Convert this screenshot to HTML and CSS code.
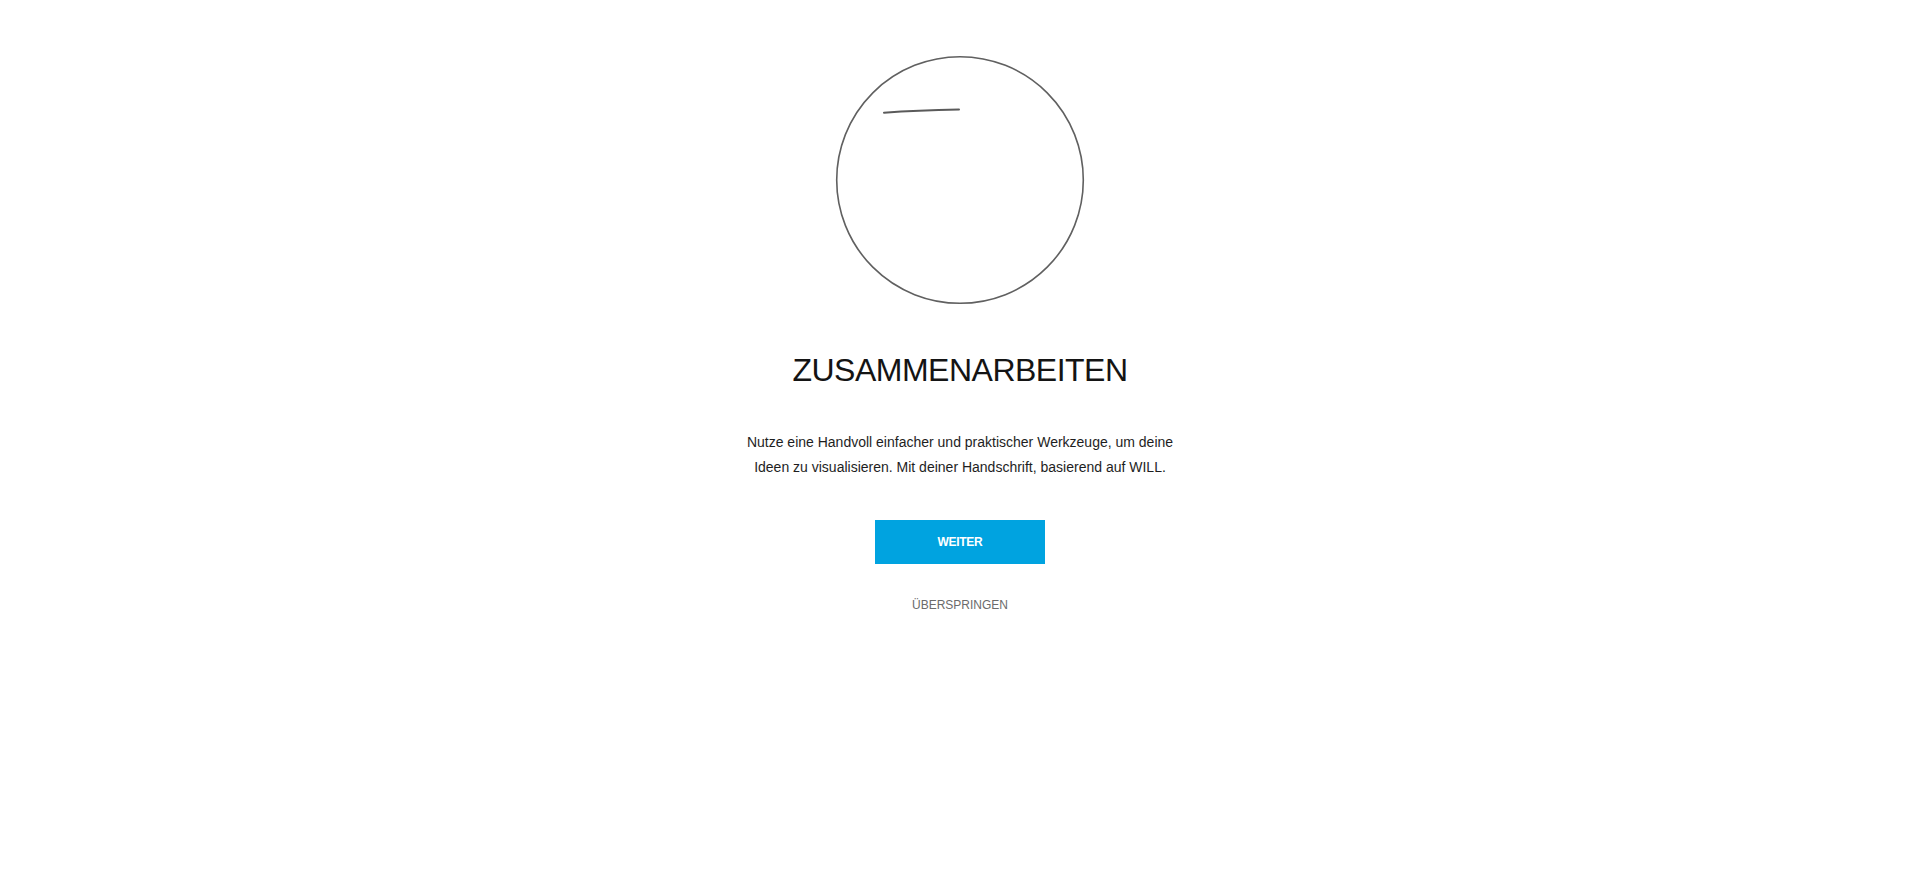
FILE: index.html
```html
<!DOCTYPE html>
<html lang="de">
<head>
<meta charset="utf-8">
<title>Zusammenarbeiten</title>
<link rel="stylesheet" href="styles.css">
</head>
<body>
<main class="onboarding">
  <svg class="illustration" width="250" height="250" viewBox="0 0 250 250" aria-hidden="true">
    <circle cx="125" cy="125" r="123.3" fill="none" stroke="#606060" stroke-width="1.6"/>
    <path d="M49 57.7 Q82 55.5 124 54.6" fill="none" stroke="#5a5a5a" stroke-width="2" stroke-linecap="round"/>
  </svg>
  <h1 class="title">ZUSAMMENARBEITEN</h1>
  <p class="text">Nutze eine Handvoll einfacher und praktischer Werkzeuge, um deine<br>Ideen zu visualisieren. Mit deiner Handschrift, basierend auf WILL.</p>
  <button class="btn-primary" type="button">WEITER</button>
  <a class="skip" href="#">ÜBERSPRINGEN</a>
</main>
</body>
</html>
```

FILE: styles.css
```css
html, body {
  margin: 0;
  padding: 0;
  background: #ffffff;
}

body {
  font-family: "Liberation Sans", Arial, Helvetica, sans-serif;
  color: #1a1a1a;
}

.onboarding {
  display: flex;
  flex-direction: column;
  align-items: center;
  padding-top: 55px;
}

.illustration {
  display: block;
}

.title {
  margin: 46px 0 0;
  font-size: 32px;
  line-height: 38px;
  font-weight: 400;
  letter-spacing: -0.5px;
  color: #141414;
}

.text {
  margin: 41px 0 0;
  font-size: 14px;
  line-height: 25px;
  text-align: center;
  color: #1e1e1e;
}

.btn-primary {
  margin-top: 40px;
  width: 170px;
  height: 44px;
  border: 0;
  border-radius: 0;
  background: #00a3e0;
  color: #ffffff;
  font-family: "Liberation Sans", Arial, Helvetica, sans-serif;
  font-size: 12px;
  font-weight: 700;
  letter-spacing: -0.3px;
  cursor: pointer;
}

.skip {
  margin-top: 34px;
  font-size: 12px;
  line-height: 14px;
  color: #6b6b6b;
  text-decoration: none;
}
```
